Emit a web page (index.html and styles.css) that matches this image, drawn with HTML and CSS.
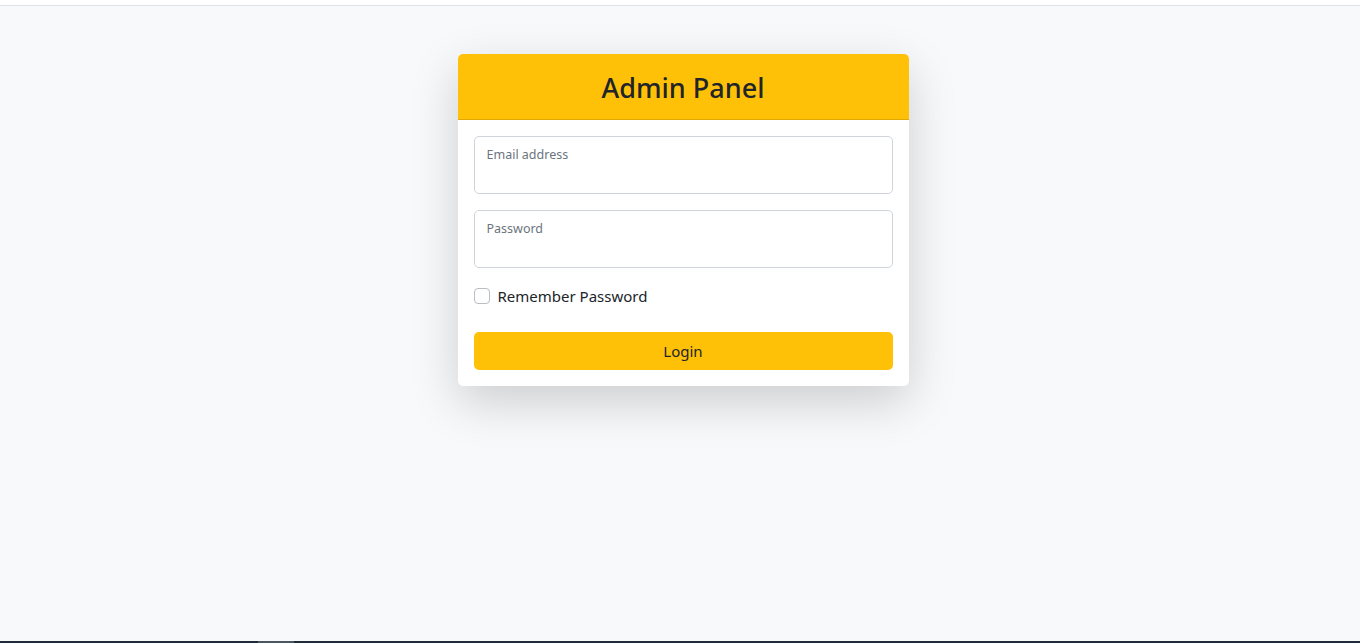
FILE: index.html
```html
<!DOCTYPE html>
<html lang="en">
<head>
<meta charset="utf-8">
<title>Admin Panel</title>
<link rel="stylesheet" href="styles.css">
</head>
<body>
<div class="page">
  <div class="topbar"></div>
  <main class="main">
    <div class="card">
      <div class="card-header"><h3 class="title">Admin Panel</h3></div>
      <form class="card-body">
        <div class="floating">
          <input class="field" type="email" id="email">
          <label for="email">Email address</label>
        </div>
        <div class="floating">
          <input class="field" type="password" id="pw">
          <label for="pw">Password</label>
        </div>
        <label class="check">
          <span class="box"></span>
          <span>Remember Password</span>
        </label>
        <button class="btn" type="button">Login</button>
      </form>
    </div>
  </main>
  <div class="bottombar"><span class="thumb"></span></div>
</div>
</body>
</html>
```
FILE: styles.css
```css
* { box-sizing: border-box; }
html, body { margin: 0; padding: 0; height: 100%; }
body {
  font-family: "Noto Sans", "Open Sans", "Liberation Sans", sans-serif;
  color: #212529;
  background: #f8f9fa;
}
.page {
  height: 643px;
  display: flex;
  flex-direction: column;
  overflow: hidden;
}
.topbar {
  height: 6px;
  background: #fff;
  border-bottom: 1px solid #dee2e6;
  flex: none;
}
.main {
  flex: 1;
  display: flex;
  justify-content: center;
  padding-top: 48px;
  padding-left: 6px;
}
.card {
  width: 451px;
  height: 332px;
  background: #fff;
  border-radius: 5px;
  box-shadow: 0 16px 48px rgba(0,0,0,0.175);
  overflow: hidden;
}
.card-header {
  height: 66px;
  background: #ffc107;
  border-bottom: 1px solid #e0a800;
  display: flex;
  align-items: center;
  justify-content: center;
}
.title {
  margin: 0;
  font-size: 27px;
  font-weight: 500;
  color: #212529;
  letter-spacing: 0;
  padding-top: 2px;
}
.card-body {
  padding: 16px;
  display: flex;
  flex-direction: column;
}
.floating {
  position: relative;
  height: 58px;
  margin-bottom: 16px;
}
.field {
  width: 100%;
  height: 58px;
  border: 1px solid #ced4da;
  border-radius: 5px;
  background: #fff;
  outline: none;
}
.floating label {
  position: absolute;
  left: 13px;
  top: 10px;
  font-size: 12.5px;
  color: #6c757d;
}
.check {
  display: flex;
  align-items: center;
  gap: 8px;
  font-size: 15px;
  height: 24px;
  margin-top: 0;
  margin-bottom: 24px;
  color: #212529;
}
.box {
  width: 16px;
  height: 16px;
  border: 1px solid #b8bec4;
  border-radius: 4px;
  background: #fff;
}
.btn {
  height: 38px;
  border: none;
  border-radius: 5px;
  background: #ffc107;
  color: #212529;
  font-family: inherit;
  font-size: 15px;
  padding: 0;
}
.bottombar {
  height: 2px;
  background: #1f2d3a;
  flex: none;
  position: relative;
}
.thumb {
  position: absolute;
  left: 258px;
  top: 0;
  width: 36px;
  height: 2px;
  background: #4c5660;
}
```
